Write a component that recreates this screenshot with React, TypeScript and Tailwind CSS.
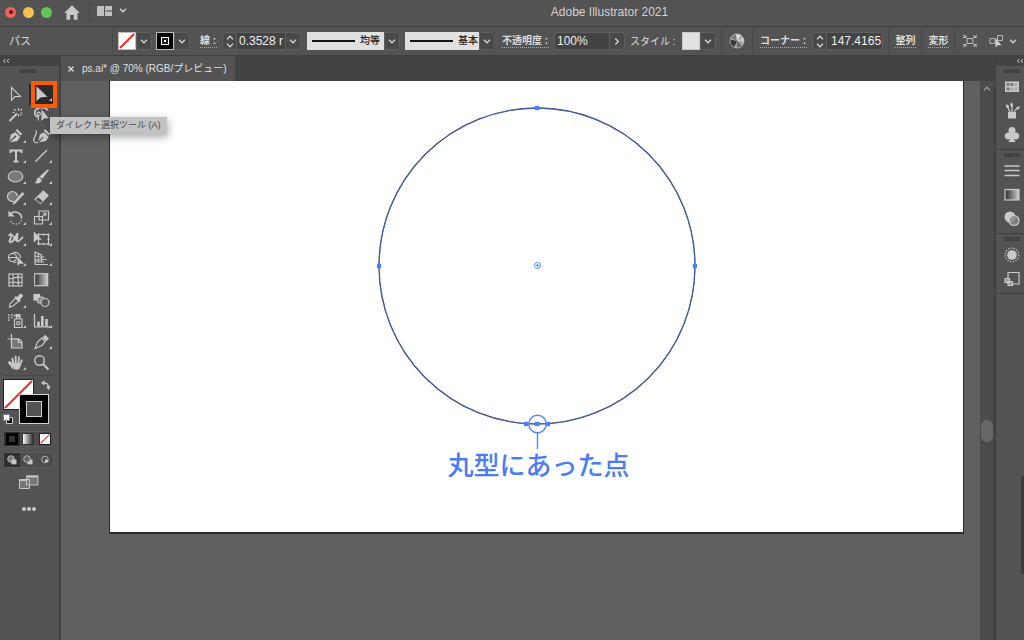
import React from "react";

type Kids = { children?: React.ReactNode };

const Glyph = ({ children }: Kids) => (
  <svg viewBox="0 0 20 20" className="h-5 w-5 shrink-0" fill="none" stroke="#c9c9c9" strokeWidth="1.2" aria-hidden="true">
    {children}
  </svg>
);

const F = "#c9c9c9";

const tools: { name: string; more?: boolean; active?: boolean; art: React.ReactNode }[] = [
  { name: "選択ツール", art: <path d="M5.5 3.5v12.8l3.4-3.6 5.6-.3z" /> },
  { name: "ダイレクト選択ツール", more: true, active: true, art: <path d="M4.5 2.2v14.8l4-3.6 6.8-.6z" fill={F} stroke="none" /> },
  {
    name: "自動選択ツール",
    art: (
      <>
        <path d="M3.5 16 11 8.5" strokeWidth="2" />
        <path d="M12.5 3v3M12.5 9v2.5M8 4l1.6 1.6M16 4l-1.6 1.6M14.5 8h2M6.5 7.5h2M15.5 10.5l-1-1" />
      </>
    ),
  },
  {
    name: "なげなわツール",
    art: (
      <>
        <path d="M5.5 12C2 11 1.8 5.8 4.8 4 8 2 14.5 2.3 15.7 5.5" strokeWidth="1.5" />
        <path d="M5 8.2c1.5-2 4-.7 3.2 1.3-.8 1.800-3.500 1-3.200-1.300 0 3 2.500 3.500 1.200 7.300" />
        <path d="M9.500 4.200v11.500l2.800-2.400h4.500z" fill={F} stroke="none" />
      </>
    ),
  },
  {
    name: "ペンツール",
    more: true,
    art: (
      <>
        <path d="M3 16.500 5 8.500l4.500-2.200 4.700 4.500-2.700 4.200z" fill={F} stroke="none" />
        <path d="m11.200 3 5 5-1.600 1.600-5-5z" fill={F} stroke="none" />
        <path d="M3 16.500 8.800 10.800" stroke="#535353" />
        <circle cx="9.200" cy="10.500" r="1" fill="#535353" stroke="none" />
      </>
    ),
  },
  {
    name: "曲線ツール",
    art: (
      <>
        <path d="M6 16.500 8 8.500l4-2.200 4.700 4.500-2.700 4.200z" fill={F} stroke="none" />
        <path d="m13.200 3 5 5-1.600 1.600-5-5z" fill={F} stroke="none" />
        <path d="M6 16.500 11.300 10.800" stroke="#535353" />
        <path d="M3.500 4.500c3.500 3-3.500 7-1.500 11 1 1.500 3 1.300 4 1" />
      </>
    ),
  },
  { name: "文字ツール", more: true, art: <path d="M4.500 7V4.500h11V7M10 4.500v11M7.500 15.500h5" strokeWidth="2" /> },
  { name: "直線ツール", more: true, art: <path d="M3.500 15.500 15 4" strokeWidth="1.400" /> },
  { name: "楕円形ツール", more: true, art: <ellipse cx="9.500" cy="9.500" rx="7.300" ry="5.500" fill="#7a7a7a" /> },
  {
    name: "ブラシツール",
    more: true,
    art: (
      <>
        <path d="m7.500 9.500 8.300-7.300 1.300.9-6.900 9z" fill={F} stroke="none" />
        <path d="M2.500 15.800c2.200 0 1.600-5 4.700-5.500l2.600 2.600c-.6 3.400-4.400 4.300-7.300 2.900z" fill={F} stroke="none" />
      </>
    ),
  },
  {
    name: "Shaper ツール",
    more: true,
    art: (
      <>
        <circle cx="6.500" cy="8.500" r="5" fill="#7a7a7a" />
        <path d="M9 14.300 17.300 5" stroke="#535353" strokeWidth="4.500" />
        <path d="M8.700 14.300 17.500 4.800" strokeWidth="2.600" />
        <path d="m6.500 16.800 1-3.500 2.300 2.200z" fill={F} stroke="none" />
      </>
    ),
  },
  {
    name: "消しゴムツール",
    more: true,
    art: (
      <>
        <path d="m2.200 11.300 9.100-9 5.700 5.200-8.500 8.800z" fill={F} stroke="none" />
        <path d="m3.800 11.500 2.300-2.200 4.500 3.700-2.200 2.300z" fill="#535353" stroke="none" />
      </>
    ),
  },
  {
    name: "回転ツール",
    more: true,
    art: (
      <>
        <path d="M4.500 5.800C8 2.500 16 4 15.500 10.500" strokeWidth="1.600" />
        <path d="M15.300 12c-1.800 5.500-9.800 5.500-11.300-.5" strokeDasharray="1.500 1.500" />
        <path d="M2.500 2.500v6h6z" fill={F} stroke="none" />
      </>
    ),
  },
  {
    name: "拡大・縮小ツール",
    more: true,
    art: <path d="M7 3h9.500v9H7zM2.500 8.500h8v7.500h-8zM9.500 9.500l4-4M11 5h2.800v2.800" />,
  },
  {
    name: "線幅ツール",
    more: true,
    art: (
      <>
        <path d="M2.500 6.500c2.500-1.500 4 0 1.800 3.500-3 5 2.700 3.500 5-1.500s2.500-5 2-1-1 5.500 1.500 4.500 2.500-4 4.500-3.500" strokeWidth="1.800" />
        <path d="m4 14 8-6M4 4l6 5.500" />
        <circle cx="9.500" cy="9.500" r="1.700" fill={F} />
      </>
    ),
  },
  {
    name: "自由変形ツール",
    more: true,
    art: (
      <>
        <path d="M6.500 5.500h10v9.500h-10z" />
        <path d="M5.500 4.500h2v2h-2zM15.500 4.500h2v2h-2zM15.500 14h2v2h-2zM5.500 14h2v2h-2zM10.800 4.500h1.500v2h-1.500zM10.800 14h1.500v2h-1.500zM15.500 9.500h2V11h-2z" fill={F} stroke="none" />
        <path d="M1.800 2.500v11l3-2.700h5z" fill={F} stroke="none" />
      </>
    ),
  },
  {
    name: "シェイプ形成ツール",
    more: true,
    art: (
      <>
        <circle cx="6.500" cy="8.500" r="4" />
        <path d="M6 4.800C9 2 14.500 4 14.500 9M7 12.500c1 .7 2 1 3.500 1M3 8.500h9" />
        <path d="M11.500 7.500v9.500l2.400-2.300h4z" fill={F} stroke="none" />
      </>
    ),
  },
  {
    name: "遠近グリッドツール",
    more: true,
    art: (
      <>
        <path d="M3 2.500v13M3 3l6.500 3v6.500M3 7l6.500 1.500M3 11h6.500M6.300 4.500v8" />
        <path d="M3 13h9M3 15.500h13M9.500 8h3M9.500 10.500h5" strokeWidth="1" />
      </>
    ),
  },
  {
    name: "メッシュツール",
    art: (
      <>
        <rect x="3" y="4" width="13" height="12" />
        <path d="M3 8.500c4 1.500 6-3 13-1M3 13c5-3 8 1.500 13-1M6.500 4c3 4-1.500 7 1 12M12.500 4c-2.500 4 2 7-.5 12" />
      </>
    ),
  },
  {
    name: "グラデーションツール",
    art: (
      <>
        <defs>
          <linearGradient id="tool-gradient">
            <stop offset="0" stopColor="#2c2c2c" />
            <stop offset="1" stopColor="#d0d0d0" />
          </linearGradient>
        </defs>
        <rect x="2.700" y="3.700" width="13" height="12" fill="url(#tool-gradient)" />
      </>
    ),
  },
  {
    name: "スポイトツール",
    more: true,
    art: (
      <>
        <path d="m9.500 7 3.300 3.300-6.300 5-3 .8.500-3z" />
        <path d="m8.500 6.300 1.300-1.200 1.300.8 2.500-2.600c1.800-1.500 4.300.8 2.800 2.700L14 8.500l.7 1.400-1.300 1.200z" fill={F} stroke="none" />
      </>
    ),
  },
  {
    name: "ブレンドツール",
    art: (
      <>
        <rect x="2" y="3.500" width="5.500" height="5.500" fill={F} />
        <rect x="5.500" y="6" width="6" height="6" rx="1.500" fill="#8a8a8a" />
        <circle cx="13" cy="11.500" r="4" fill="#5a5a5a" />
      </>
    ),
  },
  {
    name: "シンボルスプレーツール",
    more: true,
    art: (
      <>
        <path d="M8.500 8h7.500v8.500H8.500zM10.500 6h3.500v2h-3.500z" />
        <path d="M9.500 3h5v3h-5z" fill={F} stroke="none" />
        <circle cx="12.300" cy="12.300" r="1.700" />
        <path d="M2 4h1.500M5 4h1.500M2 6.500h1.500M5 6.500h1.500M2 9h1.500M7.500 4.500H9" strokeWidth="1.700" />
      </>
    ),
  },
  {
    name: "棒グラフツール",
    more: true,
    art: (
      <>
        <path d="M2.500 3v12.800H18" strokeWidth="1.300" />
        <path d="M6.500 15.500v-5M10.300 15.500V5M14.500 15.500V8" strokeWidth="2.600" />
      </>
    ),
  },
  {
    name: "アートボードツール",
    art: (
      <>
        <path d="M5.500 2v12M1.500 7H12" />
        <path d="M5.500 7h7.500l3 3v6H5.500zM12.500 7v3.500H16" fill="#777" />
      </>
    ),
  },
  {
    name: "スライスツール",
    more: true,
    art: (
      <>
        <path d="m9.800 6 3.500 3.500-3.500 4-6.800 3 2.500-6.500z" />
        <path d="M10.500 5.500 13 2.800l4 3.700-2.600 2.800z" fill={F} stroke="none" />
      </>
    ),
  },
  {
    name: "手のひらツール",
    more: true,
    art: (
      <>
        <path d="M6.500 15 2.800 10c-.5-1.200 1-1.600 2-.7L7 11.500z" fill={F} />
        <path d="M6.300 5.500 7.500 11M9.700 3.500v7M13 4.300 12.300 11M15.700 7.500 14 12" strokeWidth="1.900" strokeLinecap="round" />
        <path d="M6.500 10h8.300c.3 2.500-.8 4.500-2 6.500H8z" fill={F} stroke="none" />
      </>
    ),
  },
  {
    name: "ズームツール",
    art: (
      <>
        <circle cx="7.500" cy="7.500" r="4.800" strokeWidth="1.400" />
        <path d="m11 11 5.500 5.500" strokeWidth="2" />
      </>
    ),
  },
];

const Chevron = ({ up = false }: { up?: boolean }) => (
  <svg viewBox="0 0 8 5" className="h-[5px] w-2 shrink-0" fill="none" stroke="#d4d4d4" strokeWidth="1.300" aria-hidden="true">
    {up ? <path d="M1 4.300 4 1.200l3 3.100" /> : <path d="M1 .8 4 3.800 7 .8" />}
  </svg>
);

const DropButton = ({ label }: { label: string }) => (
  <button aria-label={label} className="flex h-[18px] w-4 shrink-0 items-center justify-center rounded-r-sm border border-[#606060] bg-[#494949]">
    <Chevron />
  </button>
);

const Stepper = ({ label }: { label: string }) => (
  <div className="flex h-[18px] w-[15px] shrink-0 flex-col rounded-l-sm border border-[#606060] bg-[#494949]">
    <button aria-label={`${label}を増やす`} className="flex flex-1 items-center justify-center"><Chevron up /></button>
    <button aria-label={`${label}を減らす`} className="flex flex-1 items-center justify-center"><Chevron /></button>
  </div>
);

const Rule = () => <span className="h-6 w-px shrink-0 bg-[#484848]" />;

const StrokeSelect = ({ label, value, left }: { label: string; value: string; left: string }) => (
  <div className={`relative ${left} shrink-0`}>
    <select
      aria-label={label}
      defaultValue={value}
      className="block h-[18px] w-full appearance-none border-r-[16px] border-[#494949] bg-[#e0e0e0] pl-[53px] text-[10px] leading-4 font-medium text-[#222]"
    >
      <option>{value}</option>
    </select>
    <svg viewBox="0 0 48 18" className="pointer-events-none absolute top-0 left-0 h-[18px] w-12" aria-hidden="true">
      <path d="M5 9h43" stroke="#151515" strokeWidth="2" />
    </svg>
    <span className="pointer-events-none absolute top-0 right-0 flex h-[18px] w-4 items-center justify-center rounded-r-sm border border-[#606060]">
      <Chevron />
    </span>
  </div>
);

const NoneMark = () => (
  <svg viewBox="0 0 30 30" className="h-full w-full" aria-hidden="true">
    <path d="M1 29 29 1" stroke="#ee2b20" strokeWidth="2" />
  </svg>
);

const SmallNoneMark = () => (
  <svg viewBox="0 0 16 16" className="h-full w-full" aria-hidden="true">
    <path d="M1 15 15 1" stroke="#ee2b20" strokeWidth="2" />
  </svg>
);

const Grip = () => <span className="mx-auto block h-1 w-4 bg-[repeating-linear-gradient(90deg,#3b3b3b_0_1px,#4a4a4a_1px_2px)]" />;

const Collapse = () => (
  <svg viewBox="0 0 8 6" className="h-[6px] w-2" fill="none" stroke="#c0c0c0" aria-hidden="true">
    <path d="M3.500 1 1.500 3l2 2M7 1 5 3l2 2" />
  </svg>
);

function TitleBar() {
  return (
    <header className="flex h-[27px] shrink-0 items-center border-b border-[#3e3e3e] pb-[2px]">
      <div className="flex w-[195px] shrink-0 items-center">
        <div className="ml-[5px] flex gap-[7px]">
          <button aria-label="閉じる" className="flex h-[11px] w-[11px] items-center justify-center rounded-full bg-[#f0635a]">
            <span className="h-1 w-1 rounded-full bg-[#6c0a05]" />
          </button>
          <button aria-label="しまう" className="h-[11px] w-[11px] rounded-full bg-[#f5be4f]" />
          <button aria-label="拡大" className="h-[11px] w-[11px] rounded-full bg-[#61c554]" />
        </div>
        <button aria-label="ホーム" className="ml-3">
          <svg viewBox="0 0 16 15" className="h-[15px] w-4" fill="#c9c9c9" aria-hidden="true">
            <path d="M8 .3 15.700 8h-2.200v6.700H9.800V10H6.200v4.700H2.500V8H.3z" />
          </svg>
        </button>
        <span className="ml-[9px] h-5 w-px bg-[#464646]" />
        <button aria-label="ワークスペース" className="mb-[3px] ml-[7px] flex items-center gap-[7px]">
          <svg viewBox="0 0 15 10" className="h-[10px] w-[15px]" fill="#c0c0c0" aria-hidden="true">
            <path d="M0 0h7v10H0zM8 0h7v4.500H8zM8 5.500h7V10H8z" />
          </svg>
          <Chevron />
        </button>
      </div>
      <h1 className="flex-1 text-center text-[12px] leading-4 text-[#d2d2d2]">Adobe Illustrator 2021</h1>
    </header>
  );
}

const linkText = "shrink-0 whitespace-nowrap border-b border-dotted border-[#a8a8a8] text-[10px] leading-[13px] font-bold";
const field = "h-[18px] shrink-0 border-y border-[#5e5e5e] bg-[#434343] text-[12px] leading-4 text-[#eeeeee] outline-none";

function ControlBar() {
  return (
    <div className="flex h-[29px] shrink-0 items-center overflow-hidden border-b border-[#3e3e3e] text-[#dcdcdc]">
      <span className="ml-[9px] w-[103px] shrink-0 text-[11px]">パス</span>
      <Rule />
      <div className="ml-[5px] flex shrink-0">
        <button aria-label="塗り" className="h-[18px] w-[18px] border border-[#bdbdbd] bg-white"><SmallNoneMark /></button>
        <DropButton label="塗りを選択" />
      </div>
      <div className="ml-1 flex shrink-0">
        <button aria-label="線の色" className="flex h-[18px] w-[18px] items-center justify-center border border-[#bdbdbd] bg-black">
          <span className="flex h-2 w-2 items-center justify-center border border-white bg-[#222]"><i className="h-[2px] w-[2px] bg-white" /></span>
        </button>
        <DropButton label="線の色を選択" />
      </div>
      <label htmlFor="stroke-weight" className={`${linkText} ml-[10px] w-[17px]`}>線 :</label>
      <div className="ml-[5px] flex shrink-0">
        <Stepper label="線幅" />
        <input id="stroke-weight" defaultValue="0.3528 r" className={`${field} w-[48px] pl-[2px]`} />
        <DropButton label="線幅を選択" />
      </div>
      <StrokeSelect label="可変線幅プロファイル" value="均等" left="ml-[6px] w-[93px]" />
      <StrokeSelect label="ブラシ定義" value="基本" left="ml-[5px] w-[90px]" />
      <label htmlFor="opacity" className={`${linkText} ml-[7px] w-[47px]`}>不透明度 :</label>
      <div className="ml-[5px] flex shrink-0">
        <input id="opacity" defaultValue="100%" className={`${field} w-[55px] rounded-l-sm border-l pl-[2px]`} />
        <button aria-label="不透明度を選択" className="flex h-[18px] w-4 items-center justify-center rounded-r-sm border border-[#606060] bg-[#494949]">
          <span className="-rotate-90"><Chevron /></span>
        </button>
      </div>
      <span className="ml-[5px] w-[52px] shrink-0 whitespace-nowrap text-[10px]">スタイル :</span>
      <button aria-label="グラフィックスタイル" className="h-[18px] w-[18px] shrink-0 border border-[#c8c8c8] bg-[#e2e2e2]" />
      <DropButton label="スタイルを選択" />
      <span className="w-[5px] shrink-0" />
      <Rule />
      <button aria-label="オブジェクトを再配色" className="mx-[7px] shrink-0">
        <svg viewBox="0 0 16 16" className="h-4 w-4" aria-hidden="true">
          <circle cx="8" cy="8" r="7" fill="#a3a3a3" />
          <path d="M8 8 2 4.500A7 7 0 0 1 7 1z" fill="#777" />
          <path d="M8 8 7 1a7 7 0 0 1 5 1z" fill="#ddd" />
          <path d="m8 8-6.800-1.500A7 7 0 0 0 5 14.500z" fill="#393939" />
          <path d="m8 8 0 7a7 7 0 0 0 5-2z" fill="#666" />
          <path d="m8 8 6.800 1A7 7 0 0 0 14 4.500z" fill="#ccc" />
          <circle cx="8" cy="8" r="7" fill="none" stroke="#bdbdbd" strokeWidth=".8" />
        </svg>
      </button>
      <Rule />
      <label htmlFor="corner" className={`${linkText} ml-[7px] w-[47px]`}>コーナー :</label>
      <div className="ml-[5px] flex shrink-0">
        <Stepper label="コーナー" />
        <input id="corner" defaultValue="147.4165" className={`${field} w-[56px] rounded-r-sm border-r pl-1`} />
      </div>
      <span className="w-[5px] shrink-0" />
      <Rule />
      <button className={`${linkText} ml-[6px] w-[21px]`}>整列</button>
      <span className="w-[5px] shrink-0" />
      <Rule />
      <button className={`${linkText} ml-[6px] w-[21px]`}>変形</button>
      <span className="w-[5px] shrink-0" />
      <Rule />
      <button aria-label="オブジェクトを編集" className="ml-[7px] shrink-0">
        <svg viewBox="0 0 16 14" className="h-[14px] w-4" fill="none" stroke="#c4c4c4" aria-hidden="true">
          <path d="M5 4.500h6v5H5z" />
          <path d="m1 1 3 2.500M15 1l-3 2.500M1 13l3-2.500M15 13l-3-2.500M4 1v2.500H1M12 1v2.500h3M4 13v-2.500H1M12 13v-2.500h3" />
        </svg>
      </button>
      <button aria-label="類似オブジェクトを選択" className="ml-[11px] flex shrink-0 items-center gap-[5px]">
        <svg viewBox="0 0 15 14" className="h-[14px] w-[15px]" fill="none" stroke="#b4b4b4" aria-hidden="true">
          <path d="M1 4.500h5v5H1zM8.500 1.500h5v5h-5zM6 6.500h2" />
          <path d="M6.500 4v9.500l2.300-2.300h3.700z" fill="#d0d0d0" stroke="none" />
        </svg>
        <Chevron />
      </button>
    </div>
  );
}

function Toolbox() {
  return (
    <aside className="relative z-10 flex w-[61px] shrink-0 flex-col border-r-2 border-[#414141]">
      <button aria-label="ツールパネルを折りたたむ" className="flex h-[10px] items-center bg-[#434343] pl-[2px]"><Collapse /></button>
      <div className="mt-[3px] mb-[11px] pr-1"><Grip /></div>
      <div className="ml-[3px] grid h-[289px] w-[52px] grid-cols-2 grid-rows-[repeat(14,minmax(0,1fr))]">
        {tools.map((t) => (
          <button key={t.name} aria-label={t.name} className={t.active ? "flex items-center justify-center bg-[#2b2b2b]" : "flex items-center justify-center"}>
            <Glyph>
              {t.art}
              {t.more && <path d="M20 14v3h-3z" fill={F} stroke="none" />}
            </Glyph>
          </button>
        ))}
      </div>
      <span className="pointer-events-none absolute top-[25px] left-[31px] h-[27px] w-[26px] border-4 border-[#fd5b02]" />
      <div role="tooltip" className="absolute top-[61px] left-[50px] flex h-[17px] w-[117px] items-center bg-[#c2c2c2] pl-[6px] text-[9px] whitespace-nowrap text-[#484848] shadow-[1px_3px_8px_rgba(0,0,0,0.35)]">
        ダイレクト選択ツール (A)
      </div>
      <div className="relative mx-[3px] mt-[2px] h-14 border-t border-[#484848]">
        <button aria-label="塗り" className="absolute top-[3px] left-0 h-[31px] w-[31px] border border-[#222] bg-white"><NoneMark /></button>
        <button aria-label="線" className="absolute top-[18px] left-4 flex h-[30px] w-[30px] items-center justify-center border border-[#d4d4d4] bg-black">
          <span className="h-4 w-4 border border-[#d4d4d4] bg-[#535353]" />
        </button>
        <button aria-label="塗りと線を入れ替え" className="absolute top-1 left-[38px]">
          <svg viewBox="0 0 10 10" className="h-[10px] w-[10px]" fill="none" stroke="#c9c9c9" strokeWidth="1.500" aria-hidden="true">
            <path d="M2 3c3.500-.5 5.500 1 5.500 4.500" />
            <path d="M3.500 0v5.500L0 3zM5 6.500h5L7.500 10z" fill="#c9c9c9" stroke="none" />
          </svg>
        </button>
        <button aria-label="初期設定の塗りと線" className="absolute top-[38px] left-0">
          <svg viewBox="0 0 10 10" className="h-[10px] w-[10px]" aria-hidden="true">
            <path d="M3.500 3.500h6v6h-6z" fill="#111" stroke="#ccc" />
            <path d="M.5.500h6v6h-6z" fill="#fff" stroke="#888" />
          </svg>
        </button>
      </div>
      <div className="mx-[3px] flex h-4 w-[51px] rounded-sm border border-[#5d5d5d] bg-[#4c4c4c]">
        <button aria-label="カラー" className="flex flex-1 items-center justify-center bg-[#2f2f2f]"><span className="h-3 w-3 border-[3px] border-black bg-[#333]" /></button>
        <button aria-label="グラデーション" className="flex flex-1 items-center justify-center"><span className="h-3 w-3 border border-[#333] bg-linear-to-r from-white to-[#333]" /></button>
        <button aria-label="なし" className="flex flex-1 items-center justify-center"><span className="h-3 w-3 border border-[#222] bg-white"><SmallNoneMark /></span></button>
      </div>
      <div className="mx-[3px] mt-[5px] flex h-4 w-[51px] rounded-sm border border-[#5d5d5d] bg-[#4c4c4c]">
        {["標準描画", "背面描画", "内側描画"].map((name, i) => (
          <button key={name} aria-label={name} className={i === 0 ? "flex flex-1 items-center justify-center bg-[#2f2f2f]" : "flex flex-1 items-center justify-center"}>
            <svg viewBox="0 0 10 10" className="h-[10px] w-[10px]" fill="none" stroke="#b5b5b5" aria-hidden="true">
              {i === 0 && <><circle cx="4" cy="4" r="3.300" fill="#777" /><path d="M4.500 4.500h5v4.800h-5z" fill="#c8c8c8" stroke="none" /></>}
              {i === 1 && <><path d="M4.500 4.500h5v4.800h-5z" fill="#c8c8c8" stroke="none" /><circle cx="4" cy="4" r="3.300" fill="#666" /></>}
              {i === 2 && <><circle cx="5" cy="4.500" r="3.300" /><path d="M5 4.500h3.300A3.300 3.300 0 0 1 5 7.800z" fill="#c8c8c8" stroke="none" /></>}
            </svg>
          </button>
        ))}
      </div>
      <button aria-label="スクリーンモードを変更" className="mt-[7px] ml-[19px] w-5">
        <svg viewBox="0 0 20 15" className="h-[15px] w-5" fill="#777" stroke="#c4c4c4" aria-hidden="true">
          <path d="M.5 4.500h10v9H.5zM7.500 1h11.500v9H7.500z" />
          <path d="M.5 5h7M7.500 1.500H19" strokeWidth="2" />
        </svg>
      </button>
      <button aria-label="ツールバーを編集" className="mt-[17px] ml-[22px] flex gap-px">
        <i className="h-1 w-1 rounded-full bg-[#c9c9c9]" />
        <i className="h-1 w-1 rounded-full bg-[#c9c9c9]" />
        <i className="h-1 w-1 rounded-full bg-[#c9c9c9]" />
      </button>
    </aside>
  );
}

function Drawing() {
  const anchors = [[160, 8], [2, 166], [318, 166], [149, 324], [160, 324], [171, 324]];
  return (
    <svg viewBox="0 0 320 350" className="mt-[19px] h-[350px] w-[320px]" fill="none" role="img" aria-label="円形のパス">
      <circle cx="160" cy="166" r="158" stroke="#37425f" strokeWidth="1.300" />
      <circle cx="160" cy="166" r="158" stroke="#4a72e8" strokeWidth=".6" />
      <circle cx="160.500" cy="324" r="8.700" stroke="#5585f5" strokeWidth="1.400" />
      <path d="M160.500 333v16" stroke="#5585f5" strokeWidth="1.400" />
      {anchors.map(([x, y]) => (
        <rect key={`${x}-${y}`} x={x - 2.2} y={y - 2.2} width="4.400" height="4.400" fill="#4a80ff" />
      ))}
      <circle cx="160.500" cy="165.500" r="3" stroke="#4a80ff" strokeWidth=".9" />
      <circle cx="160.500" cy="165.500" r="1.200" fill="#4a80ff" />
    </svg>
  );
}

function Workspace() {
  return (
    <main className="flex min-w-0 flex-1 flex-col">
      <div className="flex h-[25px] shrink-0 bg-[#434343]">
        <div className="flex w-[174px] items-center gap-2 bg-[#535353] pl-[7px] text-[#e0e0e0]">
          <button aria-label="ps.ai を閉じる" className="shrink-0">
            <svg viewBox="0 0 6 6" className="h-[6px] w-[6px]" stroke="#ddd" strokeWidth="1.300" aria-hidden="true"><path d="m.5.500 5 5M5.500.500l-5 5" /></svg>
          </button>
          <span className="text-[10px] leading-4 whitespace-nowrap">ps.ai* @ 70% (RGB/プレビュー)</span>
        </div>
      </div>
      <div className="flex min-h-0 flex-1">
        <div className="flex min-w-0 flex-1 items-start bg-[#606060] pr-4 pl-12">
          <div className="flex h-[453px] min-w-0 flex-1 flex-col items-center border-x border-b-2 border-[#2a2a2a] bg-white">
            <Drawing />
            <p className="pl-1 text-[26px] leading-8 font-medium text-[#4a7df5]">丸型にあった点</p>
          </div>
        </div>
        <div className="flex w-[14px] shrink-0 flex-col items-center bg-[#4b4b4b] pt-[5px]">
          <span className="flex opacity-60"><Chevron up /></span>
          <span className="mt-[329px] h-[22px] w-3 rounded-full bg-[#676767]" />
        </div>
      </div>
    </main>
  );
}

const panels: { name: string; art: React.ReactNode }[][] = [
  [
    {
      name: "スウォッチ",
      art: (
        <>
          <rect x="3" y="4.500" width="14" height="10.500" fill={F} stroke="none" />
          <path d="M4.500 6h3v3h-3zM8.500 6h3v3h-3zM4.500 10.500h3v3h-3z" fill="#7a7a7a" stroke="none" />
          <path d="M12.500 6h3v3h-3zM8.500 10.500h3v3h-3zM12.500 10.500h3v3h-3z" fill="#aaa" stroke="none" />
        </>
      ),
    },
    {
      name: "ブラシ",
      art: (
        <>
          <path d="M6 11h8v6.500H6z" fill={F} stroke="none" />
          <path d="M8 11 5.500 6M10 11V5M12 11l3.500-4.500" />
          <path d="M4 3.500c3 0 3.500 2 2.500 4-2-.5-3-2-2.500-4zM9 1.500c2.500 1 2.500 3 1 5-2-1.500-2-3-1-5zM17.500 5c.5 3-1.500 4-3.500 3.500 0-2 1.500-3 3.500-3.500z" fill={F} stroke="none" />
        </>
      ),
    },
    {
      name: "シンボル",
      art: (
        <g fill={F} stroke="none">
          <circle cx="10" cy="5.500" r="3.500" />
          <circle cx="6.300" cy="11" r="3.500" />
          <circle cx="13.700" cy="11" r="3.500" />
          <path d="M9.200 8h1.600c0 4 .5 7 3 9H6.200c2.500-2 3-5 3-9z" />
        </g>
      ),
    },
  ],
  [
    { name: "線", art: <path d="M2.500 5h15M2.500 9.500h15M2.500 14.500h15" strokeWidth="1.700" /> },
    { name: "グラデーション", art: <rect x="3" y="4.500" width="14" height="10.500" fill="url(#tool-gradient)" /> },
    {
      name: "透明",
      art: (
        <>
          <circle cx="8" cy="8" r="5.500" fill={F} stroke="none" />
          <circle cx="12" cy="11.500" r="5" fill="#888" fillOpacity=".8" />
        </>
      ),
    },
  ],
  [
    {
      name: "アピアランス",
      art: (
        <>
          <circle cx="10" cy="10" r="4.800" fill={F} stroke="none" />
          <circle cx="10" cy="10" r="6.800" strokeDasharray="1.300 1.500" />
        </>
      ),
    },
    {
      name: "グラフィックスタイル",
      art: (
        <>
          <path d="M6 9V3.500h11V15h-6" />
          <path d="M3 9.500h4.500v4H3zM6 12.500h4.500v4H6z" fill="#999" />
        </>
      ),
    },
  ],
];

function PanelDock() {
  return (
    <aside className="relative flex w-[30px] shrink-0 flex-col border-l-2 border-[#414141]">
      <button aria-label="パネルを展開" className="flex h-[10px] items-center justify-end bg-[#434343]"><Collapse /></button>
      {panels.map((group) => (
        <section key={group[0].name} className="flex flex-col border-b border-[#3d3d3d] pt-[3px] pb-[2px] pl-1">
          <Grip />
          <div className="mt-[2px] flex flex-col items-center">
            {group.map((p) => (
              <button key={p.name} aria-label={p.name} className="flex h-6 items-center">
                <Glyph>{p.art}</Glyph>
              </button>
            ))}
          </div>
        </section>
      ))}
      <span className="absolute top-[420px] right-0 h-[98px] w-[3px] rounded-l-sm bg-[#3a3a3a]" />
    </aside>
  );
}

export default function App() {
  return (
    <div className="flex h-screen flex-col overflow-hidden bg-[#535353] font-['Liberation_Sans','Noto_Sans_CJK_JP',sans-serif]">
      <TitleBar />
      <ControlBar />
      <div className="flex min-h-0 flex-1">
        <Toolbox />
        <Workspace />
        <PanelDock />
      </div>
    </div>
  );
}
